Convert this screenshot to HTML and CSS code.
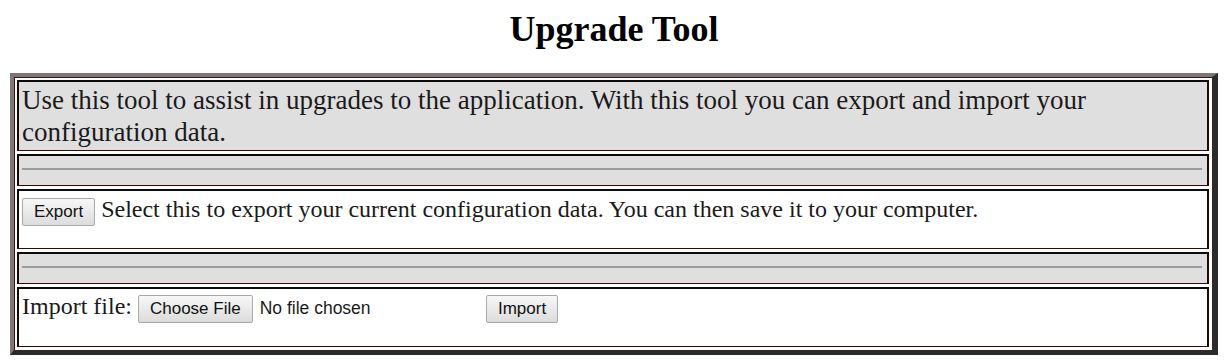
FILE: index.html
```html
<!DOCTYPE html>
<html>
<head>
<meta charset="utf-8">
<title>Upgrade Tool</title>
<link rel="stylesheet" href="styles.css">
</head>
<body>
<h1 class="title">Upgrade Tool</h1>
<table class="tool">
  <tr><td class="cell gray intro">Use this tool to assist in upgrades to the application. With this tool you can export and import your configuration data.</td></tr>
  <tr><td class="cell gray sep"><div class="rule"></div></td></tr>
  <tr><td class="cell white action export-row"><button class="btn">Export</button> <span class="desc">Select this to export your current configuration data. You can then save it to your computer.</span></td></tr>
  <tr><td class="cell gray sep"><div class="rule"></div></td></tr>
  <tr><td class="cell white action import-row"><span class="desc">Import file:</span> <span class="file"><button class="btn">Choose File</button><span class="nofile">No file chosen</span></span> <button class="btn">Import</button></td></tr>
</table>
</body>
</html>
```
FILE: styles.css
```css
html, body { margin: 0; padding: 0; background: #fff; }
body { padding: 0 10px 0 10px; font-family: "Liberation Serif", "Times New Roman", serif; color: #1a1a1a; }
.title {
  margin: 0;
  padding-top: 9px;
  height: 73px;
  box-sizing: border-box;
  text-align: center;
  font-size: 36px;
  font-weight: bold;
  line-height: 40px;
  color: #000;
}
.tool {
  width: 100%;
  border-collapse: separate;
  border-spacing: 3px;
  border-style: solid;
  border-width: 4px 6px 5px 4px;
  border-color: #7d7878 #2c2a2a #2c2a2a #7d7878;
  box-shadow: inset 1px 1px 0 #4a1010;
}
.cell {
  border-style: solid;
  border-width: 2px 2px 1px 2px;
  border-color: #0b0b0b #2a0505 #3a0606 #1a0505;
  padding: 0 3px;
  vertical-align: top;
}
.gray { background: #e0dfdf; }
.white { background: #fff; }
.intro {
  font-size: 27px;
  line-height: 32px;
  padding-top: 2px;
  padding-bottom: 2px;
  height: 64px;
}
.sep { height: 17px; padding: 12px 3px 0 3px; }
.rule { height: 2px; background: #9c9c9c; margin-right: 2px; }
.action { font-size: 24px; line-height: 28px; }
.export-row { height: 53px; padding-top: 4px; }
.import-row { height: 54px; padding-top: 3px; }
.desc { font-size: 24px; }
.btn {
  font-family: "Liberation Sans", Arial, sans-serif;
  font-size: 17px;
  height: 28px;
  padding: 0 11px;
  margin: 0;
  background: linear-gradient(#f7f7f7, #dcdcdc);
  border: 1px solid #a9a9a9;
  border-radius: 2px;
  color: #111;
}
.file { display: inline-block; width: 342px; white-space: nowrap; }
.nofile { font-family: "Liberation Sans", Arial, sans-serif; font-size: 17.5px; padding-left: 7px; }
```
